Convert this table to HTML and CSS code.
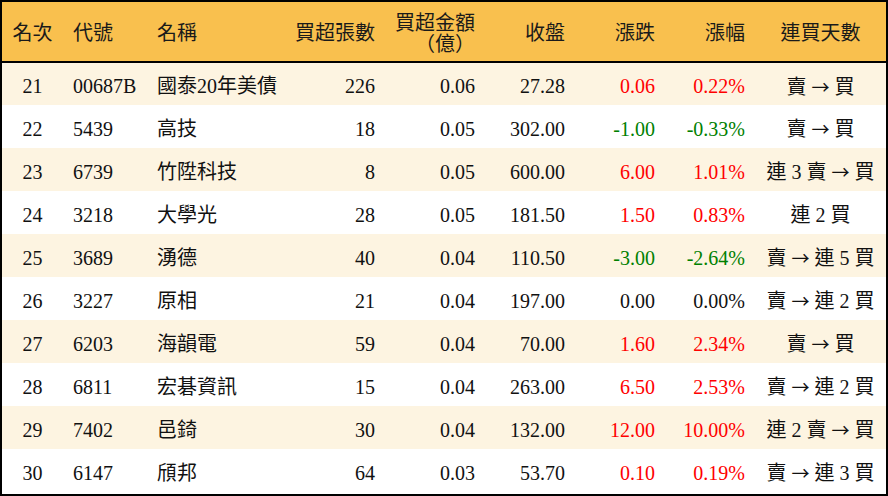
FILE: index.html
```html
<!DOCTYPE html>
<html lang="zh-Hant">
<head>
<meta charset="utf-8">
<link rel="stylesheet" href="styles.css">
</head>
<body>
<div class="board">
<table class="rank">
<thead>
<tr>
<th class="c-rank">名次</th>
<th class="c-code">代號</th>
<th class="c-name">名稱</th>
<th class="c-num">買超張數</th>
<th class="c-num c-two">買超金額<br>（億）</th>
<th class="c-num">收盤</th>
<th class="c-num">漲跌</th>
<th class="c-num">漲幅</th>
<th class="c-days">連買天數</th>
</tr>
</thead>
<tbody>
<tr><td class="c-rank">21</td><td class="c-code">00687B</td><td class="c-name">國泰20年美債</td><td class="c-num">226</td><td class="c-num">0.06</td><td class="c-num">27.28</td><td class="c-num up">0.06</td><td class="c-num up">0.22%</td><td class="c-days">賣 <span class="arrow">→</span> 買</td></tr>
<tr><td class="c-rank">22</td><td class="c-code">5439</td><td class="c-name">高技</td><td class="c-num">18</td><td class="c-num">0.05</td><td class="c-num">302.00</td><td class="c-num down">-1.00</td><td class="c-num down">-0.33%</td><td class="c-days">賣 <span class="arrow">→</span> 買</td></tr>
<tr><td class="c-rank">23</td><td class="c-code">6739</td><td class="c-name">竹陞科技</td><td class="c-num">8</td><td class="c-num">0.05</td><td class="c-num">600.00</td><td class="c-num up">6.00</td><td class="c-num up">1.01%</td><td class="c-days">連 3 賣 <span class="arrow">→</span> 買</td></tr>
<tr><td class="c-rank">24</td><td class="c-code">3218</td><td class="c-name">大學光</td><td class="c-num">28</td><td class="c-num">0.05</td><td class="c-num">181.50</td><td class="c-num up">1.50</td><td class="c-num up">0.83%</td><td class="c-days">連 2 買</td></tr>
<tr><td class="c-rank">25</td><td class="c-code">3689</td><td class="c-name">湧德</td><td class="c-num">40</td><td class="c-num">0.04</td><td class="c-num">110.50</td><td class="c-num down">-3.00</td><td class="c-num down">-2.64%</td><td class="c-days">賣 <span class="arrow">→</span> 連 5 買</td></tr>
<tr><td class="c-rank">26</td><td class="c-code">3227</td><td class="c-name">原相</td><td class="c-num">21</td><td class="c-num">0.04</td><td class="c-num">197.00</td><td class="c-num">0.00</td><td class="c-num">0.00%</td><td class="c-days">賣 <span class="arrow">→</span> 連 2 買</td></tr>
<tr><td class="c-rank">27</td><td class="c-code">6203</td><td class="c-name">海韻電</td><td class="c-num">59</td><td class="c-num">0.04</td><td class="c-num">70.00</td><td class="c-num up">1.60</td><td class="c-num up">2.34%</td><td class="c-days">賣 <span class="arrow">→</span> 買</td></tr>
<tr><td class="c-rank">28</td><td class="c-code">6811</td><td class="c-name">宏碁資訊</td><td class="c-num">15</td><td class="c-num">0.04</td><td class="c-num">263.00</td><td class="c-num up">6.50</td><td class="c-num up">2.53%</td><td class="c-days">賣 <span class="arrow">→</span> 連 2 買</td></tr>
<tr><td class="c-rank">29</td><td class="c-code">7402</td><td class="c-name">邑錡</td><td class="c-num">30</td><td class="c-num">0.04</td><td class="c-num">132.00</td><td class="c-num up">12.00</td><td class="c-num up">10.00%</td><td class="c-days">連 2 賣 <span class="arrow">→</span> 買</td></tr>
<tr><td class="c-rank">30</td><td class="c-code">6147</td><td class="c-name">頎邦</td><td class="c-num">64</td><td class="c-num">0.03</td><td class="c-num">53.70</td><td class="c-num up">0.10</td><td class="c-num up">0.19%</td><td class="c-days">賣 <span class="arrow">→</span> 連 3 買</td></tr>
</tbody>
</table>
</div>
</body>
</html>
```
FILE: styles.css
```css
html, body {
  margin: 0;
  padding: 0;
  background: #ffffff;
}
.board {
  width: 888px;
  height: 496px;
  box-sizing: border-box;
  border: 2px solid #000000;
  overflow: hidden;
}
.rank {
  width: 884px;
  border-collapse: collapse;
  border-spacing: 0;
  table-layout: fixed;
  font-family: "Liberation Serif", "Noto Sans CJK TC", serif;
  font-size: 20px;
  color: #111111;
}
.rank th,
.rank td {
  padding: 4px 10px 0 10px;
  white-space: nowrap;
  overflow: hidden;
}
.rank thead tr {
  height: 60px;
  background: #f9c04e;
}
.rank th {
  font-weight: normal;
  line-height: 21px;
  border-bottom: 2px solid #000000;
  color: #1a1a1a;
}
.rank tbody tr {
  height: 43px;
}
.rank tbody tr:nth-child(odd) {
  background: #fdf4e1;
}
.rank td {
  line-height: 24px;
}
.rank th:nth-child(1) { width: 41px; }
.rank th:nth-child(2) { width: 64px; }
.rank th:nth-child(3) { width: 118px; }
.rank th:nth-child(4) { width: 80px; }
.rank th:nth-child(5) { width: 80px; }
.rank th:nth-child(6) { width: 70px; }
.rank th:nth-child(7) { width: 70px; }
.rank th:nth-child(8) { width: 70px; }
.rank th:nth-child(9) { width: 111px; }
.c-rank { text-align: center; }
.c-code, .c-name { text-align: left; }
.c-num { text-align: right; }
.c-days { text-align: center; }
.arrow {
  font-family: "Noto Sans CJK TC", sans-serif;
  font-size: 18px;
}
.up { color: #ff0000; }
.down { color: #008000; }
```
